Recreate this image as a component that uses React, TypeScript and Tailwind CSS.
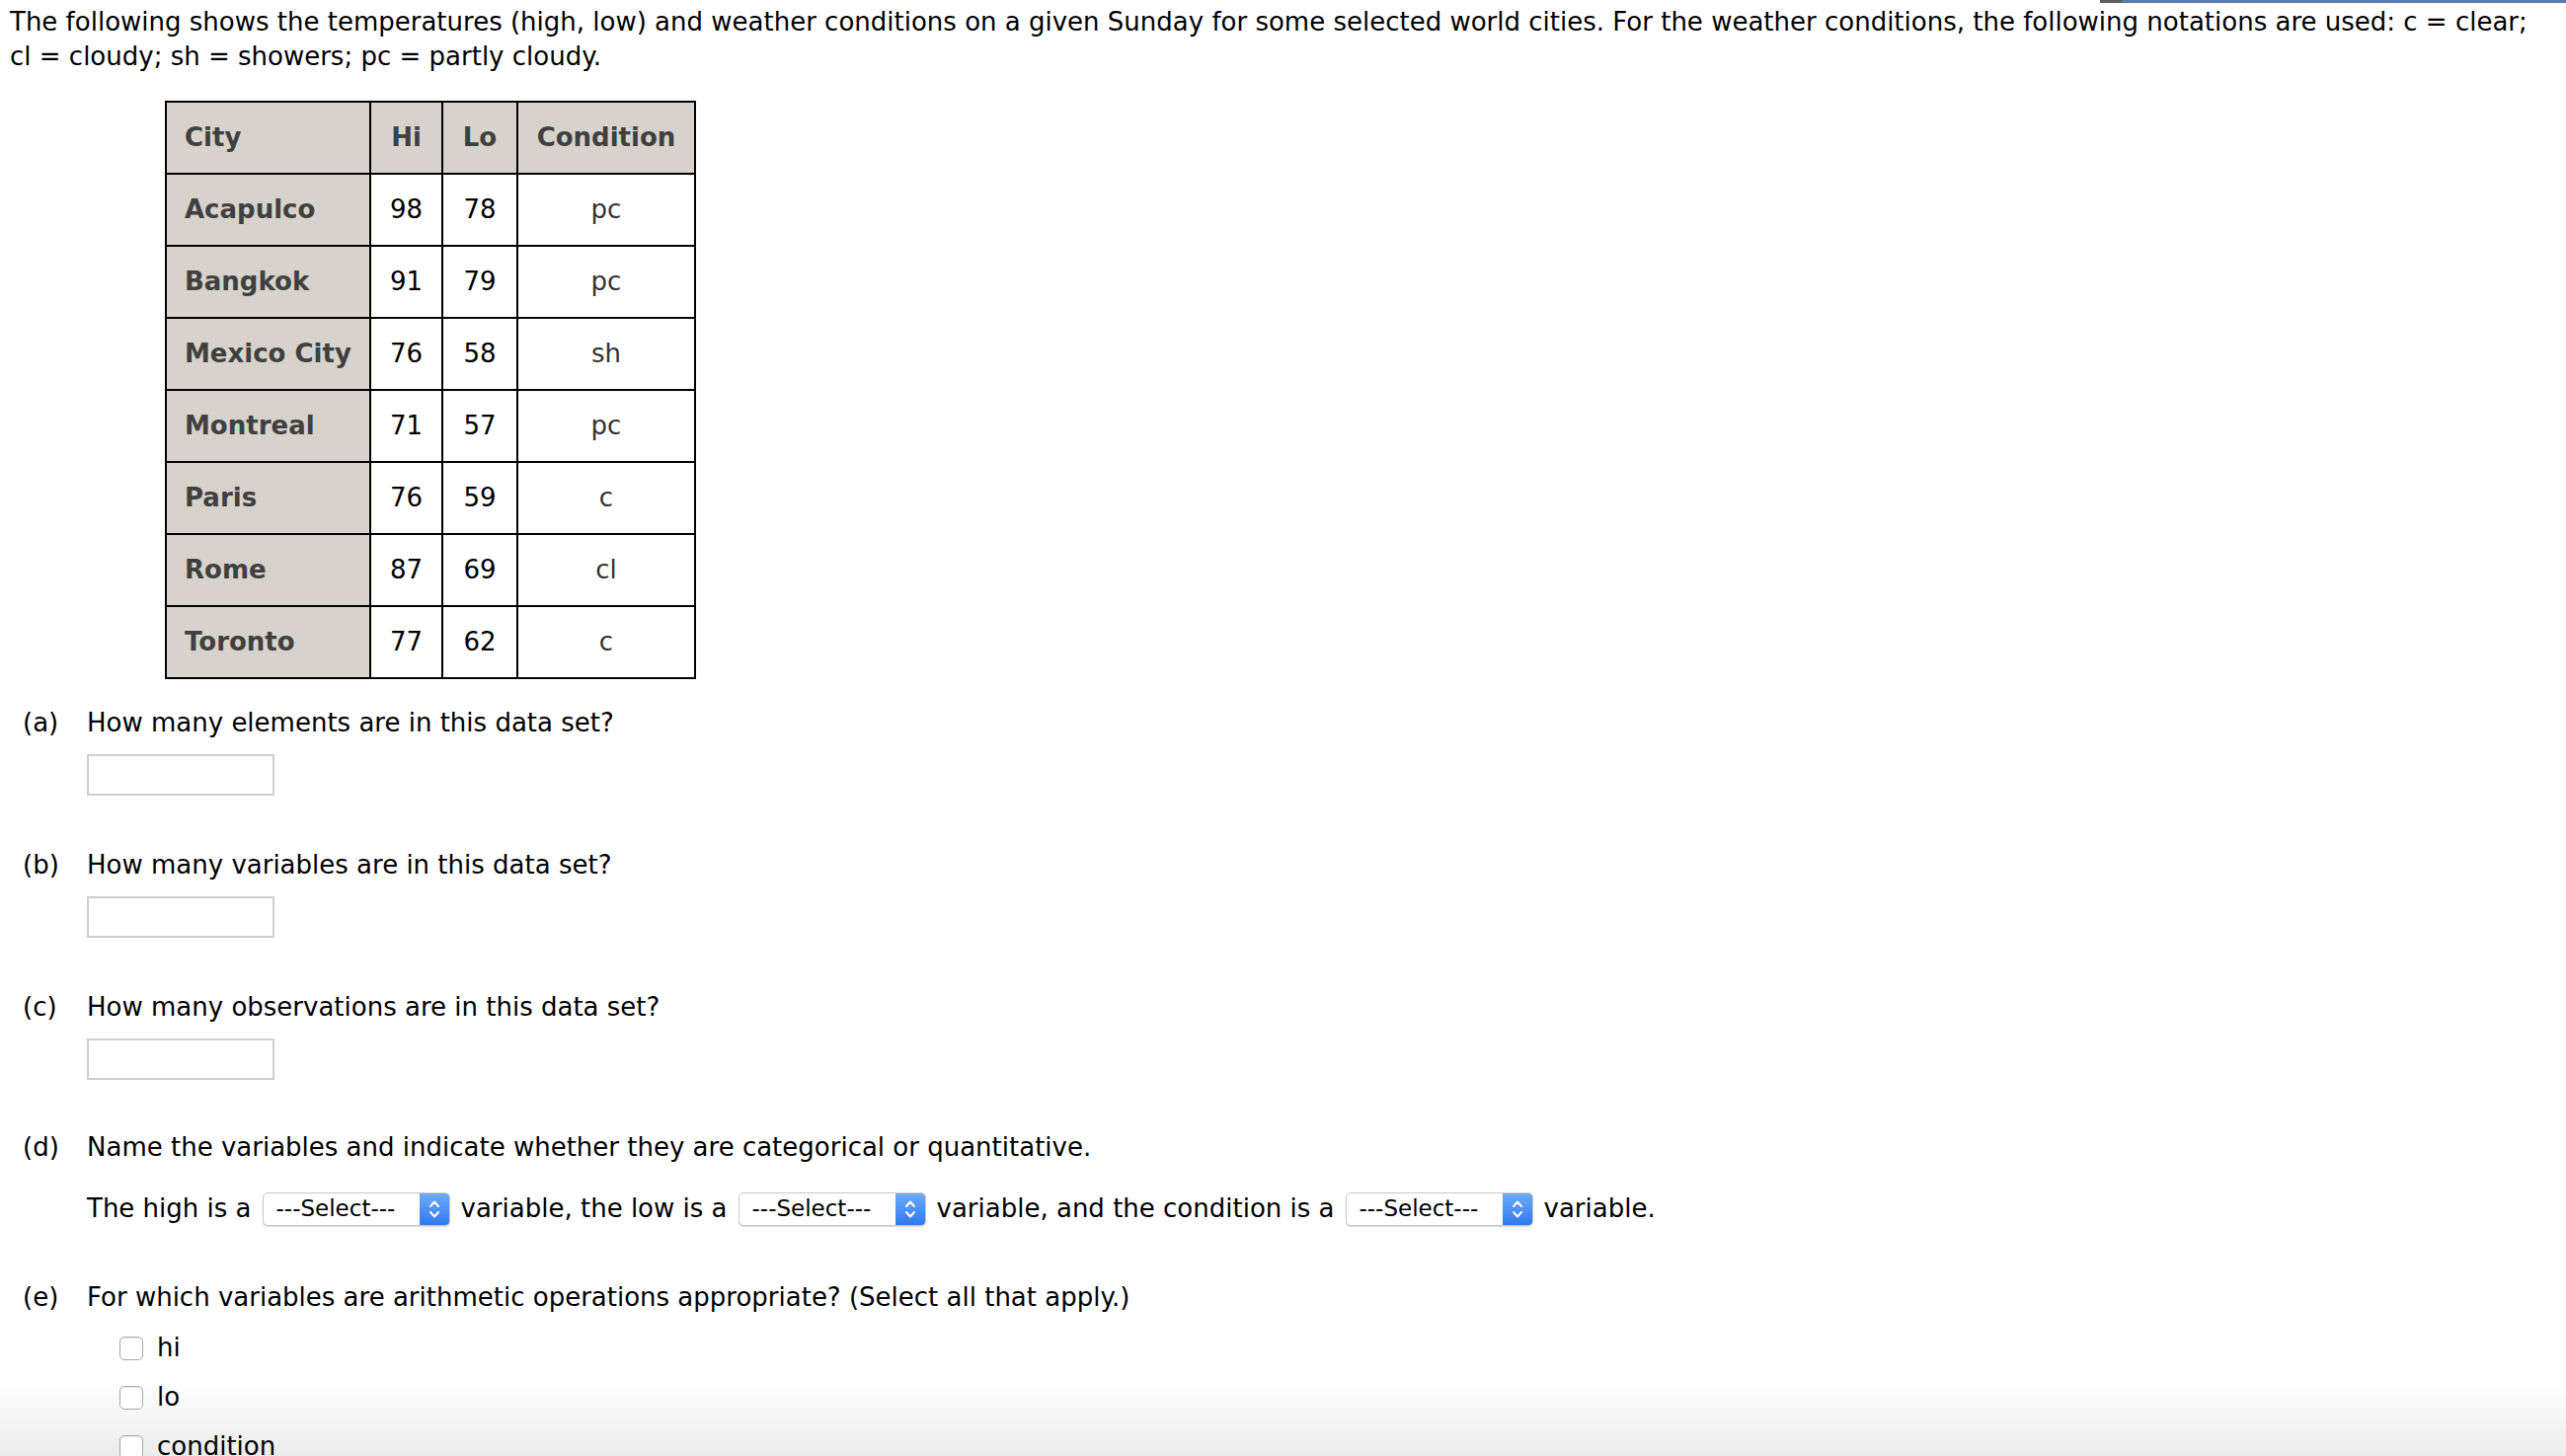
import { useState } from 'react';

const rows = [
  { city: 'Acapulco', hi: 98, lo: 78, cond: 'pc' },
  { city: 'Bangkok', hi: 91, lo: 79, cond: 'pc' },
  { city: 'Mexico City', hi: 76, lo: 58, cond: 'sh' },
  { city: 'Montreal', hi: 71, lo: 57, cond: 'pc' },
  { city: 'Paris', hi: 76, lo: 59, cond: 'c' },
  { city: 'Rome', hi: 87, lo: 69, cond: 'cl' },
  { city: 'Toronto', hi: 77, lo: 62, cond: 'c' },
];

const SelectBox = () => (
  <span className="inline-flex h-[34px] w-[190px] items-stretch overflow-hidden rounded-[5px] border border-[#c8c8c8] bg-white shadow-[0_1px_1px_rgba(0,0,0,0.15)] align-middle">
    <span className="flex flex-1 items-center pl-[13px] text-[23px] leading-none text-black">---Select---</span>
    <span className="flex w-[30px] items-center justify-center bg-gradient-to-b from-[#6eaaf9] to-[#2f78ee]">
      <svg width="14" height="26" viewBox="0 0 14 26" fill="none" stroke="white" strokeWidth="2" strokeLinecap="round" strokeLinejoin="round">
        <path d="M3 10 L7 5.5 L11 10" />
        <path d="M3 16 L7 20.5 L11 16" />
      </svg>
    </span>
  </span>
);

const Question = ({ label, text }: { label: string; text: string }) => (
  <div className="flex h-[35px] items-center">
    <span className="w-[88px] shrink-0 pl-[23px]">{label}</span>
    <span>{text}</span>
  </div>
);

const Answer = () => <div className="ml-[88px] mt-[14px] h-[42px] w-[190px] border-2 border-[#cfcfcf] bg-white" />;

const Check = ({ label }: { label: string }) => {
  const [on, setOn] = useState(false);
  return (
    <label className="flex h-[35px] items-center pl-[121px]" onClick={() => setOn(!on)}>
      <span className="mr-[14px] h-[24px] w-[24px] rounded-[5px] border border-[#a9a9a9] bg-white shadow-[inset_0_1px_1px_rgba(0,0,0,0.08)]">
        {on && <span className="block h-full w-full rounded-[4px] bg-[#2f78ee]" />}
      </span>
      <span>{label}</span>
    </label>
  );
};

export default function App() {
  return (
    <div className="relative min-h-[1475px] overflow-hidden bg-white text-[26px] leading-[35px] text-black [font-family:'DejaVu_Sans',Verdana,sans-serif]">
      {/* page fade near the bottom */}
      <div className="pointer-events-none absolute bottom-[7px] left-0 right-0 h-[75px] bg-gradient-to-b from-white to-[#ebebeb]" />

      {/* top bar fragment */}
      <div className="absolute right-0 top-0 flex h-[3px] w-[472px]">
        <div className="w-[23px] bg-[#5f5f5f]" />
        <div className="flex-1 bg-[#5b7cb1]" />
      </div>

      <div className="relative">
        <div className="pl-[10px] pr-[25px] pt-[5px]">
          The following shows the temperatures (high, low) and weather conditions on a given Sunday for some selected world cities. For the weather conditions, the following notations are used: c = clear; cl = cloudy; sh = showers; pc = partly cloudy.
        </div>

        <table className="ml-[167px] mt-[27px] border-collapse border-2 border-black">
          <colgroup>
            <col className="w-[207px]" />
            <col className="w-[73px]" />
            <col className="w-[76px]" />
            <col className="w-[180px]" />
          </colgroup>
          <thead>
            <tr className="h-[73px] bg-[#d7d3cc] font-bold text-[#404040]">
              <th className="border-2 border-black pl-[18px] text-left">City</th>
              <th className="border-2 border-black text-center">Hi</th>
              <th className="border-2 border-black text-center">Lo</th>
              <th className="border-2 border-black text-center">Condition</th>
            </tr>
          </thead>
          <tbody>
            {rows.map((r) => (
              <tr key={r.city} className="h-[73px]">
                <td className="whitespace-nowrap border-2 border-black bg-[#d7d3cc] pl-[18px] pr-[10px] font-bold text-[#404040]">{r.city}</td>
                <td className="border-2 border-black text-center">{r.hi}</td>
                <td className="border-2 border-black text-center">{r.lo}</td>
                <td className="border-2 border-black text-center text-[#333]">{r.cond}</td>
              </tr>
            ))}
          </tbody>
        </table>

        <div className="mt-[27px]">
          <Question label="(a)" text="How many elements are in this data set?" />
          <Answer />
        </div>
        <div className="mt-[53px]">
          <Question label="(b)" text="How many variables are in this data set?" />
          <Answer />
        </div>
        <div className="mt-[53px]">
          <Question label="(c)" text="How many observations are in this data set?" />
          <Answer />
        </div>
        <div className="mt-[51px]">
          <Question label="(d)" text="Name the variables and indicate whether they are categorical or quantitative." />
          <div className="mt-[27px] flex h-[35px] items-center gap-[11px] pl-[88px]">
            <span>The high is a</span>
            <SelectBox />
            <span>variable, the low is a</span>
            <SelectBox />
            <span>variable, and the condition is a</span>
            <SelectBox />
            <span>variable.</span>
          </div>
        </div>
        <div className="mt-[55px]">
          <Question label="(e)" text="For which variables are arithmetic operations appropriate? (Select all that apply.)" />
          <div className="mt-[16px] flex flex-col gap-[15px]">
            <Check label="hi" />
            <Check label="lo" />
            <Check label="condition" />
          </div>
        </div>
      </div>

      {/* dock edge */}
      <div className="pointer-events-none absolute bottom-0 left-0 right-0 h-[7px] bg-gradient-to-r from-[#8e7c74] via-[#7b7478] to-[#5e6172]" />
    </div>
  );
}
